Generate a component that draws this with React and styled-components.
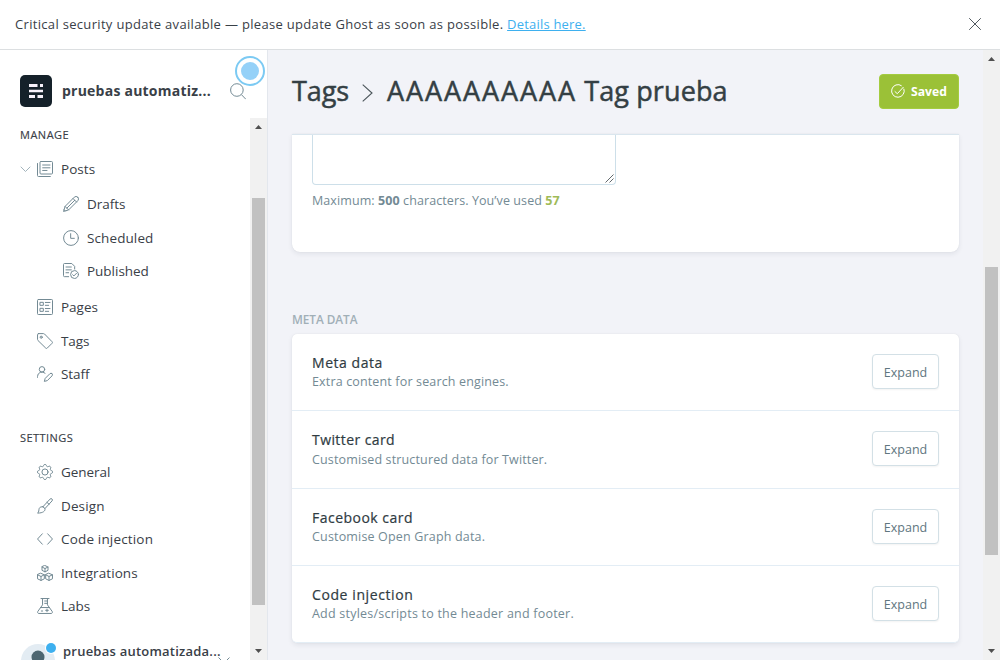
import React from "react";
import styled, { createGlobalStyle } from "styled-components";

const Global = createGlobalStyle`
  *, *::before, *::after { box-sizing: border-box; }
  html, body { margin: 0; padding: 0; height: 100%; }
  body {
    overflow: hidden;
    background: #fff;
    color: #394047;
    font-family: "Open Sans", "Noto Sans", sans-serif;
    font-size: 13.5px;
  }
`;

const Page = styled.div`
  display: flex;
  flex-direction: column;
  width: 1000px;
  height: 660px;
  overflow: hidden;
`;

const Banner = styled.header`
  display: flex;
  flex: none;
  align-items: center;
  justify-content: space-between;
  height: 50px;
  padding: 0 19px 2px 15px;
  border-bottom: 1px solid #dcdfe1;
  background: #fff;
`;

const BannerText = styled.p`
  margin: 0;
  font-size: 13px;
  letter-spacing: 0.32px;
  line-height: 20px;
  white-space: nowrap;
`;

const BannerLink = styled.a`
  color: #3eb0ef;
  letter-spacing: 0.2px;
  text-decoration: underline;
`;

const Body = styled.div`
  display: flex;
  flex: 1;
  min-height: 0;
`;

const Sidebar = styled.aside`
  position: relative;
  display: flex;
  flex: none;
  flex-direction: column;
  width: 268px;
  border-right: 1px solid #e3e7ed;
  background: #fff;
`;

const SiteHeader = styled.div`
  display: flex;
  flex: none;
  align-items: center;
  height: 68px;
  padding: 14px 21px 0 20px;
`;

const Logo = styled.svg`
  flex: none;
  width: 32px;
  height: 32px;
`;

const SiteName = styled.div`
  flex: 1;
  margin: -2px 0 0 10px;
  font-size: 14px;
  font-weight: 700;
  letter-spacing: 0.23px;
  white-space: nowrap;
`;

const Beacon = styled.div`
  position: absolute;
  top: 6px;
  left: 235px;
  display: grid;
  place-items: center;
  width: 30px;
  height: 30px;
  border: 2px solid #7ccaf3;
  border-radius: 50%;
  background: #fff;

  &::after {
    content: "";
    width: 18px;
    height: 18px;
    border-radius: 50%;
    background: #95d1f8;
  }
`;

const SidebarScroll = styled.div`
  display: flex;
  flex: 1;
  min-height: 0;
`;

const NavContent = styled.nav`
  flex: 1;
  min-width: 0;
  overflow: hidden;
`;

const NavHeading = styled.h2`
  height: 20px;
  margin: ${(p) => p.$top}px 0 ${(p) => p.$bottom}px 20px;
  font-size: 11px;
  font-weight: 500;
  letter-spacing: ${(p) => p.$spacing}px;
  line-height: 20px;
  text-transform: uppercase;
  -webkit-text-stroke: 0.15px currentColor;
`;

const NavGroup = styled.div`
  display: flex;
  flex-direction: column;
  margin-bottom: ${(p) => p.$after || 0}px;
`;

const NavItem = styled.a`
  position: relative;
  display: flex;
  align-items: center;
  gap: 8px;
  height: 33.5px;
  padding-left: ${(p) => (p.$nested ? 63 : 37)}px;
  letter-spacing: ${(p) => p.$spacing ?? 0.1}px;
  white-space: nowrap;

  svg { flex: none; }
`;

const Disclosure = styled.svg`
  position: absolute;
  left: 20px;
  top: 12px;
  width: 11px;
  height: 10px;
`;

const UserMenu = styled.div`
  position: relative;
  display: flex;
  align-items: flex-start;
  gap: 6px;
  height: 42px;
  margin-top: 19px;
  padding-left: 21px;
  white-space: nowrap;
`;

const Avatar = styled.svg`
  flex: none;
  width: 36px;
  height: 40px;
`;

const UserName = styled.div`
  font-size: 13px;
  font-weight: 600;
  line-height: 18px;
  letter-spacing: 0.23px;
`;

const UserChevron = styled.svg`
  position: absolute;
  left: 218px;
  top: 14px;
  width: 12px;
  height: 9px;
`;

const Track = styled.div`
  display: flex;
  flex: none;
  flex-direction: column;
  align-items: center;
  width: 17px;
  background: #f1f1f1;
`;

const Thumb = styled.div`
  width: 13px;
  height: ${(p) => p.$height}px;
  margin-top: ${(p) => p.$offset}px;
  margin-bottom: auto;
  background: #c1c1c1;
`;

const Arrow = styled.svg`
  flex: none;
  width: 17px;
  height: 17px;
`;

const Main = styled.main`
  flex: 1;
  min-width: 0;
  padding: 0 24px;
  background: #f2f3f8;
`;

const TitleBar = styled.div`
  display: flex;
  align-items: center;
  justify-content: space-between;
  height: 82px;
  margin-bottom: 2px;
`;

const Title = styled.h1`
  display: flex;
  align-items: center;
  margin: 0;
  color: #343f44;
  font-size: 27px;
  font-weight: 500;
  line-height: 36px;
  white-space: nowrap;
  -webkit-text-stroke: 0.5px currentColor;

  svg { margin: 4px 14px 0 13px; }
`;

const TagName = styled.span`
  letter-spacing: ${(p) => p.$spacing}px;
`;

const SaveButton = styled.button`
  display: flex;
  align-items: center;
  gap: 6px;
  width: 80px;
  height: 35px;
  padding: 0 0 0 11px;
  border: 1px solid #a4cc40;
  border-radius: 4px;
  background: #9bc137;
  color: #fff;
  font: 700 12.2px "Open Sans", sans-serif;
`;

const Card = styled.section`
  border-radius: ${(p) => (p.$clipped ? "0 0 8px 8px" : "5px")};
  background: #fff;
  box-shadow: 0 2px 5px rgba(30, 40, 60, 0.08), 0 0 1px rgba(30, 40, 60, 0.12);
`;

const DescriptionCard = styled(Card)`
  height: 118px;
  padding: 0 20px;
  border-top: 1px solid #dae6ee;
`;

const TextBox = styled.div`
  display: flex;
  align-items: flex-end;
  justify-content: flex-end;
  width: 304px;
  height: 50px;
  border: 1px solid #cddfe9;
  border-top: 0;
  border-radius: 0 0 4px 4px;
`;

const Hint = styled.p`
  margin: 6px 0 0;
  color: #738a94;
  font-size: 12.5px;
  letter-spacing: 0.09px;
  line-height: 20px;
`;

const Used = styled.b`
  color: #9fbb58;
`;

const SectionLabel = styled.h2`
  margin: 57px 0 5px;
  color: #a1afb7;
  font-size: 11.8px;
  font-weight: 600;
  letter-spacing: -0.05px;
  line-height: 20px;
`;

const SettingRow = styled.div`
  display: flex;
  align-items: flex-start;
  justify-content: space-between;
  height: ${(p) => p.$height}px;
  padding: 20px;
  border-bottom: 1px solid #e3edf5;

  &:last-child { border-radius: 0 0 5px 5px; }
`;

const SettingTitle = styled.h3`
  margin: -1px 0 0;
  color: #2f3b42;
  font-size: 14px;
  font-weight: 500;
  letter-spacing: ${(p) => p.$spacing}px;
  line-height: 19px;
  -webkit-text-stroke: 0.2px currentColor;
`;

const SettingText = styled.p`
  margin: ${(p) => p.$gap}px 0 0;
  color: #738a94;
  font-size: 12.5px;
  letter-spacing: ${(p) => p.$spacing}px;
  line-height: 18px;
`;

const ExpandButton = styled.button`
  width: 67px;
  height: 35px;
  padding: 1px 0 0;
  border: 1px solid #d3e0e6;
  border-radius: 4px;
  background: #fff;
  box-shadow: 0 1px 2px rgba(0, 0, 0, 0.05);
  color: #607680;
  font: 400 12.5px "Open Sans", sans-serif;
  letter-spacing: 0;
`;

const gearOutline = Array.from({ length: 64 }, (_, i) => {
  const angle = (i / 64) * Math.PI * 2;
  const radius = 10.1 + 1.3 * Math.tanh(2 * Math.cos(8 * angle));
  return `${(12 + radius * Math.cos(angle)).toFixed(2)} ${(12 + radius * Math.sin(angle)).toFixed(2)}`;
}).join("L");

const icons = {
  posts: (
    <>
      <rect x="4.5" y="0.75" width="18.75" height="18.75" rx="1.5" />
      <path d="M20 23.25H2.25A1.5 1.5 0 0 1 .75 21.75V3.75M8.5 6h11M8.5 10.2h11M8.5 14.2h6.5" />
    </>
  ),
  drafts: (
    <path d="M22.2 1.8a3.7 3.7 0 0 0-5.3 0L3.1 15.6.8 23.2l7.6-2.3L22.2 7.1a3.7 3.7 0 0 0 0-5.3zM15 3.7 20.3 9M3.1 15.6l5.3 5.3M17.6 6.4 5.8 18.2M1.6 20.6l1.8 1.8" />
  ),
  scheduled: (
    <>
      <circle cx="12" cy="12" r="11.1" />
      <path d="M11.5 5.5V12.5h5.5" />
    </>
  ),
  published: (
    <>
      <path d="M8.5 20.5H2.2A1.5 1.5 0 0 1 .75 19V2.2A1.5 1.5 0 0 1 2.2.75h11l4.3 4.3v4M4.5 6h8M4.5 10.3h8M4.5 14.6h4" />
      <circle cx="17.3" cy="17.3" r="5.9" />
      <path d="m14.5 17.6 1.9 1.8 3.9-4" />
    </>
  ),
  pages: (
    <>
      <rect x="0.75" y="0.75" width="22.5" height="22.5" rx="1.3" />
      <rect x="5" y="5" width="4.5" height="4.5" />
      <rect x="5" y="14" width="4.5" height="4.5" />
      <path d="M12.5 5.2h7M12.5 9.5h5M12.5 14.3h7M12.5 18.5h5" />
    </>
  ),
  tags: (
    <>
      <path d="M2.2.9h7.6c.6 0 1.1.2 1.5.6l11.3 11.6a1.6 1.6 0 0 1 0 2.3l-7.2 7.2a1.6 1.6 0 0 1-2.3 0L1.4 11.2a2 2 0 0 1-.6-1.5V2.3C.8 1.5 1.4.9 2.2.9z" />
      <circle cx="6.3" cy="6.3" r="1.6" />
    </>
  ),
  staff: (
    <>
      <circle cx="7.5" cy="5" r="4.1" />
      <path d="M.75 17v-1.2a6.8 6.8 0 0 1 11.4-5M22.5 11.5a2.2 2.2 0 0 0-3.1 0l-7.1 7.1-1.3 4.5 4.5-1.2 7-7.1a2.3 2.3 0 0 0 0-3.3z" />
    </>
  ),
  general: (
    <>
      <circle cx="12" cy="12" r="4.6" />
      <path d={`M${gearOutline}z`} />
    </>
  ),
  design: (
    <path d="M8.8 13.2 19.6 1.6a2 2 0 0 1 3 2.700L12 15.800M8.800 13.200l3.200 2.600c.6 3.700-2.700 6.700-11.200 6.900 2.500-1.600 1.600-4.600 2.500-6.900.8-2.200 3.400-3 5.500-2.600zM15 6.600l3.200 2.700" />
  ),
  code: <path d="M8 4.2.8 12 8 19.8M16 4.2 23.2 12 16 19.8" />,
  integrations: (
    <path d="M12 .8 16.5 3v5L12 10.3 7.5 8V3zM7.5 3 12 5.3 16.5 3M12 5.3v5M6 12.5l5 2.2v6L6 23.2l-5.2-2.5v-6zM.8 14.7 6 17.2l5-2.5M6 17.2v6M18 12.5l5.2 2.2v6L18 23.2l-5-2.5v-6zM13 14.7l5 2.5 5.2-2.5M18 17.2v6" />
  ),
  labs: (
    <path d="M6 .8h12M8.3.8v9.5L1.2 20.2c-.9 1.5 0 3 1.5 3h18.6c1.5 0 2.4-1.5 1.5-3L15.7 10.3V.8M5.3 14.3h13.4M11.5 4.5h4M11.5 8h4M6.5 19.5h2M13 18.5h4M15 16.6v4" />
  ),
};

const Icon = ({ name }) => (
  <svg
    width="16"
    height="16"
    viewBox="0 0 24 24"
    fill="none"
    stroke="#738a94"
    strokeWidth="1.5"
    strokeLinecap="round"
    strokeLinejoin="round"
  >
    {icons[name]}
  </svg>
);

const Scrollbar = ({ offset, height }) => (
  <Track>
    <Arrow viewBox="0 0 17 17">
      <path d="M5 11h7L8.5 7z" fill="#505050" />
    </Arrow>
    <Thumb $offset={offset} $height={height} />
    <Arrow viewBox="0 0 17 17">
      <path d="M5 6h7L8.5 10z" fill="#505050" />
    </Arrow>
  </Track>
);

const posts = [
  ["drafts", "Drafts", -0.05],
  ["scheduled", "Scheduled", 0.1],
  ["published", "Published", -0.02],
];

const manage = [
  ["pages", "Pages", 0],
  ["tags", "Tags", -0.1],
  ["staff", "Staff", -0.05],
];

const settings = [
  ["general", "General", -0.05],
  ["design", "Design", 0.12],
  ["code", "Code injection", 0.17],
  ["integrations", "Integrations", 0.07],
  ["labs", "Labs", -0.05],
];

const cards = [
  { title: "Meta data", text: "Extra content for search engines.", height: 77, gap: 1, ts: 0.55, ds: 0.15 },
  { title: "Twitter card", text: "Customised structured data for Twitter.", height: 78, gap: 2, ts: 0.42, ds: 0.14 },
  { title: "Facebook card", text: "Customise Open Graph data.", height: 77, gap: 1, ts: 0.48, ds: 0.17 },
  { title: "Code injection", text: "Add styles/scripts to the header and footer.", height: 77, gap: 1, ts: 0.6, ds: 0.22 },
];

const NavList = ({ items, nested }) =>
  items.map(([icon, label, spacing]) => (
    <NavItem key={label} $nested={nested} $spacing={spacing}>
      <Icon name={icon} />
      {label}
    </NavItem>
  ));

export default function App() {
  return (
    <Page>
      <Global />
      <Banner>
        <BannerText>
          Critical security update available — please update Ghost as soon as possible.{" "}
          <BannerLink>Details here.</BannerLink>
        </BannerText>
        <svg width="12" height="12" viewBox="0 0 12 12" fill="none" stroke="#50595f" strokeWidth="1">
          <path d="m.2.2 11.6 11.6M11.8.2.2 11.8" />
        </svg>
      </Banner>
      <Body>
        <Sidebar>
          <SiteHeader>
            <Logo viewBox="0 0 32 32">
              <rect width="32" height="32" rx="5" fill="#15212a" />
              <path
                d="M9 9h8.5v3H9zM20 9h3v3h-3zM9 14.7h14v2.6H9zM9 20h6v3H9zM17.5 20H23v3h-5.5z"
                fill="#f7f2fb"
              />
            </Logo>
            <SiteName>pruebas automatiz...</SiteName>
            <svg width="16" height="17" viewBox="0 0 16 17" fill="none" stroke="#738a94" strokeWidth="1">
              <circle cx="6.9" cy="7" r="6.3" />
              <path d="m11.4 11.6 4.4 4.6" />
            </svg>
          </SiteHeader>
          <Beacon />
          <SidebarScroll>
            <NavContent>
              <NavHeading $top={7} $bottom={7.2} $spacing={0.5}>Manage</NavHeading>
              <NavGroup $after={1.9}>
                <NavItem $spacing={0.05}>
                  <Disclosure viewBox="0 0 11 10" fill="none" stroke="#a3b4bc" strokeLinecap="round">
                    <path d="M1 3l4.5 4.5L10 3" />
                  </Disclosure>
                  <Icon name="posts" />
                  Posts
                </NavItem>
              </NavGroup>
              <NavGroup $after={2.3}>
                <NavList items={posts} nested />
              </NavGroup>
              <NavGroup>
                <NavList items={manage} />
              </NavGroup>
              <NavHeading $top={37.3} $bottom={7.4} $spacing={0.45}>Settings</NavHeading>
              <NavGroup>
                <NavList items={settings} />
              </NavGroup>
              <UserMenu>
                <Avatar viewBox="0 0 36 40">
                  <circle cx="17" cy="19" r="17" fill="#e3ecf3" />
                  <circle cx="17" cy="15" r="6.5" fill="#4d6671" />
                  <path d="M6 31c1-8 21-8 22 0z" fill="#4d6671" />
                  <circle cx="30" cy="6" r="6" fill="#fff" />
                  <circle cx="30" cy="6" r="5" fill="#3eb0ef" />
                </Avatar>
                <UserName>pruebas automatizada...</UserName>
                <UserChevron viewBox="0 0 12 9" fill="none" stroke="#738a94">
                  <path d="m.5 1.5 5.5 5.5 5.5-5.5" />
                </UserChevron>
              </UserMenu>
            </NavContent>
            <Scrollbar offset={63} height={407} />
          </SidebarScroll>
        </Sidebar>
        <Main>
          <TitleBar>
            <Title>
              <TagName $spacing={-0.1}>Tags</TagName>
              <svg width="11" height="18" viewBox="0 0 11 18" fill="none" stroke="#4a5459" strokeWidth="1.1">
                <path d="m.7.7 9.3 8.3-9.3 8.3" />
              </svg>
              <TagName $spacing={1.93}>AAAAAAAAAA</TagName>
              <TagName $spacing={0.12}>&nbsp;Tag prueba</TagName>
            </Title>
            <SaveButton>
              <svg width="14" height="14" viewBox="0 0 14 14" fill="none" stroke="#fff" strokeWidth="1">
                <path d="M12.8 4.7a6.3 6.3 0 1 1-2.1-2.8M3.7 7.3l2.6 2.4 6.2-6.7" />
              </svg>
              Saved
            </SaveButton>
          </TitleBar>
          <DescriptionCard $clipped>
            <TextBox>
              <svg width="11" height="11" viewBox="0 0 11 11" stroke="#50585c" strokeWidth="0.9">
                <path d="M1.5 9.5l8-8M5.5 9.5l4-4" />
              </svg>
            </TextBox>
            <Hint>
              Maximum: <b>500</b> characters. You’ve used <Used>57</Used>
            </Hint>
          </DescriptionCard>
          <SectionLabel>META DATA</SectionLabel>
          <Card>
            {cards.map((c) => (
              <SettingRow key={c.title} $height={c.height}>
                <div>
                  <SettingTitle $spacing={c.ts}>{c.title}</SettingTitle>
                  <SettingText $gap={c.gap} $spacing={c.ds}>{c.text}</SettingText>
                </div>
                <ExpandButton>Expand</ExpandButton>
              </SettingRow>
            ))}
          </Card>
        </Main>
        <Scrollbar offset={200} height={288} />
      </Body>
    </Page>
  );
}
